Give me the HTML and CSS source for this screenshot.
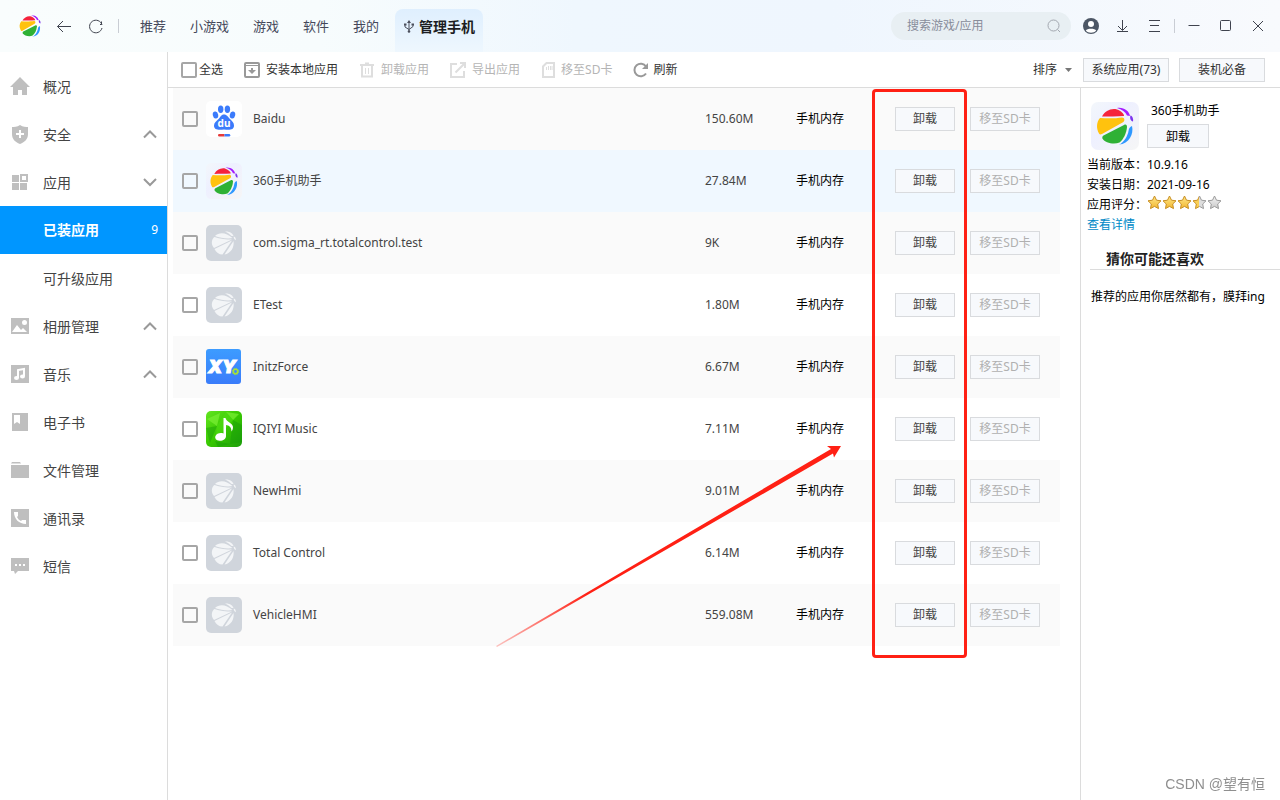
FILE: index.html
```html
<!DOCTYPE html>
<html lang="zh-CN">
<head>
<meta charset="utf-8">
<meta name="viewport" content="width=device-width, initial-scale=1">
<title>360手机助手</title>
<link rel="stylesheet" href="styles.css">
</head>
<body>
<svg class="defs" aria-hidden="true">
  <defs>
    <linearGradient id="tile" x1="0" y1="0" x2="1" y2="1"><stop offset="0" stop-color="#f3f7fb"/><stop offset=".4" stop-color="#eef0ff"/><stop offset="1" stop-color="#f6f6f6"/></linearGradient>
    <linearGradient id="xy" x1="0" y1="0" x2="0" y2="1"><stop offset="0" stop-color="#3d9cff"/><stop offset="1" stop-color="#3a7cfa"/></linearGradient>
    <linearGradient id="leaf" x1="0" y1="0" x2="1" y2="1"><stop offset="0" stop-color="#63e520"/><stop offset=".5" stop-color="#37c800"/><stop offset="1" stop-color="#1d9d0c"/></linearGradient>
    <linearGradient id="gold" x1="0" y1="0" x2="0" y2="1"><stop offset="0" stop-color="#ffe98a"/><stop offset="1" stop-color="#f2b630"/></linearGradient>
    <linearGradient id="silver" x1="0" y1="0" x2="0" y2="1"><stop offset="0" stop-color="#f4f4f4"/><stop offset="1" stop-color="#c9c9c9"/></linearGradient>
    <linearGradient id="half"><stop offset=".5" stop-color="#f9cf55"/><stop offset=".5" stop-color="#dedede"/></linearGradient>
    <linearGradient id="half-line"><stop offset=".5" stop-color="#c98f22"/><stop offset=".5" stop-color="#9b9b9b"/></linearGradient>
    <linearGradient id="fade" gradientUnits="userSpaceOnUse" x1="0" y1="202" x2="90" y2="148"><stop offset="0" stop-color="#ff2014" stop-opacity=".25"/><stop offset="1" stop-color="#ff2014"/></linearGradient>
  </defs>
  <symbol id="ball" viewBox="5 5 38 38">
    <path fill="#f5233c" d="M11 14.500C14 9 20 6 26 7.500 30 9 33 11.500 33 14 26 14.500 17 14.500 11 14.500Z"/>
    <path fill="#ffc20e" d="M9 16C16 16.500 25 16.500 31 15.500 34 15.500 34 19 32 20.300L11 32C9.500 32.800 8.500 32.500 8 31.500 5 26 5.500 20 9 16Z"/>
    <path fill="#2fb135" d="M12.500 33.500 33 23C35 22 36 23 36 25 35.500 31 32.500 37.500 28.500 40.500 23 43 14 41 11.500 36.500 11 35 11.500 34.200 12.500 33.500Z"/>
    <path fill="#2e98ff" d="M41 24C43 32 38 42 28 42.500 33 41 37 33 37.500 29 38 26 39 25 41 24Z"/>
    <path fill="#a41bff" d="M26 6C33 5 38 9 39 14L36 13.500C34.500 10 31 7.500 26 6Z"/>
    <path fill="#7c35ee" d="M39.500 13.500C41.500 14 42.500 17 42 19.500 39.500 19 38.500 16 39.500 13.500Z"/>
  </symbol>
  <symbol id="app-360" viewBox="0 0 48 48"><rect width="48" height="48" rx="7" fill="url(#tile)"/><use href="#ball" x="5" y="5" width="38" height="38"/></symbol>
  <symbol id="app-blank" viewBox="0 0 36 36">
    <rect width="36" height="36" rx="5" fill="#d0d5dc"/>
    <g fill="#f3f5f7"><path d="M9 11C13 7 20 7 26.500 13 22 14 14 13 9 11ZM6 16C6.500 14 7.500 12.500 8.500 12 14 14 20 14.500 26 14.500L8 23C6 21 5.500 18 6 16ZM8.500 24 26 15.500 16.500 29.500C13 29.500 10 27.500 8.500 24ZM18.500 29.500 27.500 16C28.500 22 25 28.500 18.500 29.500ZM19 6.500C23.500 6 27 8.500 27.500 11L25.500 11C23.500 9 22 8 19 6.500ZM27.700 11.500C29.500 12 30.200 14 29.700 15.200 28.500 14.500 27.500 13 27.700 11.500Z"/></g>
  </symbol>
  <symbol id="app-music" viewBox="0 0 36 36">
    <rect width="36" height="36" rx="5" fill="url(#leaf)"/>
    <path fill="#7bf034" opacity=".7" d="M1 8 14 2 11 15ZM20 1 33 3 27 9Z"/><path fill="#169b08" opacity=".45" d="M0 17 11 15 4 32ZM27 9 36 14V31L24 33ZM9 30 24 33 12 36Z"/><path fill="#4fdc12" opacity=".6" d="M11 15 20 1 27 9 9 30Z"/>
    <path fill="#fff" d="M17.500 7H19.500C20 11 27 12 27 16 27 18 26.500 19 25.500 20.500 25.500 16 23 14.500 20 14V25C20 28 17 30 13.500 29.800 10 29.500 8.500 27 9.500 25 10.500 22.500 14 21.500 17.500 22.500Z"/>
  </symbol>
  <symbol id="up" viewBox="0 0 16 16"><path d="M2 10.500 8 4.500 14 10.500" fill="none" stroke="#999" stroke-width="2"/></symbol>
  <symbol id="down" viewBox="0 0 16 16"><path d="M2 4 8 10 14 4" fill="none" stroke="#999" stroke-width="2"/></symbol>
  <symbol id="star" viewBox="0 0 15 15"><path d="M7.500 1 9.500 5.200 14 5.800 10.700 9 11.500 13.600 7.500 11.400 3.500 13.600 4.300 9 1 5.800 5.500 5.200Z" stroke-linejoin="round"/></symbol>
</svg>

<header class="titlebar">
  <svg class="brand" aria-label="360手机助手"><use href="#ball"/></svg>
  <button class="plain back" aria-label="后退"><svg width="16" height="16" viewBox="0 0 16 16"><path d="M15 8.500H1.500M7 3 1.500 8.500 7 14"/></svg></button>
  <button class="plain reload" aria-label="刷新页面"><svg width="16" height="16" viewBox="0 0 16 16"><path d="M14 7A6.300 6.300 0 1 0 14 10M13.500 3.500V6.500H12"/></svg></button>
  <span class="divider"></span>
  <nav class="tabs" aria-label="主导航">
    <a href="#">推荐</a><a href="#">小游戏</a><a href="#">游戏</a><a href="#">软件</a><a href="#">我的</a>
    <a class="current" href="#" aria-current="page"><svg width="12" height="13" viewBox="0 0 12 13"><path d="M6 1.500V12M2 5V7L6 9.500M10 4V6.500L6 9.500" fill="none" stroke="#4b4f5c"/><path d="M6 0 8 3H4ZM1 3.500H3.500V5.500H1ZM8.500 3.500H11V5.500H8.500Z" fill="#4b4f5c"/><circle cx="6" cy="11.500" r="1.300" fill="#4b4f5c"/></svg>管理手机</a>
  </nav>
  <form class="search" role="search">
    <input type="search" placeholder="搜索游戏/应用" aria-label="搜索游戏/应用">
    <button class="plain" type="button" aria-label="搜索"><svg width="16" height="16" viewBox="0 0 16 16"><circle cx="7.500" cy="7.500" r="5.500"/><path d="M11.500 11.500 14 14"/></svg></button>
  </form>
  <div class="tools">
    <button class="plain" aria-label="账户"><svg width="16" height="16" viewBox="0 0 16 16"><circle cx="8" cy="8" r="8" fill="#4c5665" stroke="none"/><circle cx="8" cy="6" r="3" fill="#fff" stroke="none"/><path d="M2.800 12.500C4 10 12 10 13.200 12.500 11 15.500 5 15.500 2.800 12.500Z" fill="#fff" stroke="none"/></svg></button>
    <button class="plain" aria-label="下载"><svg width="16" height="16" viewBox="0 0 16 16"><path d="M7.500 2V12M3 8 7.500 12.500 12 8M2 13.500H13"/></svg></button>
    <button class="plain" aria-label="菜单"><svg width="16" height="16" viewBox="0 0 16 16"><path d="M2 2.500H13M3 7.500H12M2 13.500H13"/></svg></button>
  </div>
  <span class="divider"></span>
  <div class="tools">
    <button class="plain" aria-label="最小化"><svg width="16" height="16" viewBox="0 0 16 16"><path d="M2.500 7.500H13.500"/></svg></button>
    <button class="plain" aria-label="最大化"><svg width="16" height="16" viewBox="0 0 16 16"><rect x="2.500" y="2.500" width="10" height="10" rx="1"/></svg></button>
    <button class="plain" aria-label="关闭"><svg width="16" height="16" viewBox="0 0 16 16"><path d="M3 3 13 13M13 3 3 13"/></svg></button>
  </div>
</header>

<div class="body">
  <nav class="sidebar" aria-label="手机管理">
    <a href="#"><svg viewBox="0 0 20 20"><path d="M10 0 20 10H17V18H12V13H8V18H3V10H0Z"/></svg>概况</a>
    <a href="#"><svg viewBox="0 0 20 20"><path d="M10 0C13 2 16 2 18 2V9C18 14 15 17 10 19 5 17 2 14 2 9V2C4 2 7 2 10 0Z"/><path d="M6 9H14M10 5V13" stroke="#fff" stroke-width="2"/></svg>安全<svg class="chevron"><use href="#up"/></svg></a>
    <a href="#"><svg viewBox="0 0 20 20"><path d="M2 2H9V9H2ZM2 10H9V17H2ZM10 10H17V17H10ZM10 1H18V9H10ZM12 3V7H16V3Z" fill-rule="evenodd"/></svg>应用<svg class="chevron"><use href="#down"/></svg></a>
    <a class="sub active" href="#" aria-current="page">已装应用<span class="count">9</span></a>
    <a class="sub" href="#">可升级应用</a>
    <a href="#"><svg viewBox="0 0 20 20"><path d="M1 1H19V17H1Z"/><path d="M2 15 7 8 11 13 13 11 17 15Z" fill="#fff"/><circle cx="14.500" cy="5.500" r="2.500" fill="#fff"/></svg>相册管理<svg class="chevron"><use href="#up"/></svg></a>
    <a href="#"><svg viewBox="0 0 20 20"><path d="M1 0H19V18H1Z"/><path d="M8 13V5L14 4V11" fill="none" stroke="#fff" stroke-width="2"/><ellipse cx="6.500" cy="13" rx="2.500" ry="2" fill="#fff"/><ellipse cx="12.500" cy="11.500" rx="2.500" ry="2" fill="#fff"/></svg>音乐<svg class="chevron"><use href="#up"/></svg></a>
    <a href="#"><svg viewBox="0 0 20 20"><path d="M2 0H18V18H2Z"/><path d="M4 2H10V11L7 9 4 11Z" fill="#fff"/></svg>电子书</a>
    <a href="#"><svg viewBox="0 0 20 20"><path d="M2 1H10L11 2.500H1ZM1 4H19V17H1Z"/></svg>文件管理</a>
    <a href="#"><svg viewBox="0 0 20 20"><path d="M1 0H19V18H1Z"/><path d="M4 3H8V7L7 8C8 10 9 11 11 12L12 11H16V15C9 15 4 10 4 3Z" fill="#fff"/></svg>通讯录</a>
    <a href="#"><svg viewBox="0 0 20 20"><path d="M1 1H19V14H8L5 17 4 14H1Z"/><path d="M5 7H7V9H5ZM9 7H11V9H9ZM13 7H15V9H13Z" fill="#fff"/></svg>短信</a>
  </nav>

  <div class="workspace">
    <div class="toolbar">
      <label class="select-all"><input type="checkbox">全选</label>
      <button class="plain action"><svg width="16" height="16" viewBox="0 0 16 16"><rect x="1" y="1" width="14" height="14" rx="1" stroke-width="2"/><path d="M2 3.500H14" stroke-width="1"/><path d="M7 6H9V8H12L8 12 4 8H7Z" fill="#999" stroke="none"/></svg>安装本地应用</button>
      <button class="plain action" disabled><svg width="16" height="16" viewBox="0 0 16 16"><path d="M1 3H15M6 1.500H10M3 4V14.500H13V4" stroke-width="2"/><path d="M6.500 6V12M9.500 6V12" stroke-width="1"/></svg>卸载应用</button>
      <button class="plain action" disabled><svg width="16" height="16" viewBox="0 0 16 16"><path d="M7 2H1V15H14V9M5.500 10.500 14.500 1.500M10 1H15V6" stroke-width="2"/></svg>导出应用</button>
      <button class="plain action" disabled><svg width="14" height="16" viewBox="0 0 14 16"><path d="M5.500 1H13V15H2V4.500Z" stroke-width="2"/><path d="M5.500 5V8M7.500 4V8M9.500 4V8M11 4V8" stroke-width="1"/></svg>移至SD卡</button>
      <button class="plain action refresh"><svg width="16" height="16" viewBox="0 0 16 16"><path d="M13 11.500A6.300 6.300 0 1 1 13 4.500" stroke-width="2"/><path d="M15 1V7H9Z" fill="#999" stroke="none"/></svg>刷新</button>
      <div class="toolbar-end">
        <button class="plain sort">排序<svg width="7" height="4" viewBox="0 0 7 4"><path d="M0 0H7L3.500 4Z" fill="#777"/></svg></button>
        <button class="btn wide">系统应用(73)</button>
        <button class="btn wide">装机必备</button>
      </div>
    </div>

    <div class="content">
      <main class="list">
        <table>
          <colgroup><col class="c-check"><col><col class="c-size"><col class="c-store"><col class="c-act"></colgroup>
          <tbody>
            <tr><td><input type="checkbox" aria-label="Baidu"></td><td><div class="app"><svg viewBox="0 0 36 36" aria-hidden="true">
              <rect width="36" height="36" rx="5" fill="#fff"/>
              <g fill="#3b7bfb"><ellipse cx="9.500" cy="14" rx="2.700" ry="3.500" transform="rotate(-12 9.500 14)"/><ellipse cx="14.700" cy="8.200" rx="2.700" ry="3.700"/><ellipse cx="21.400" cy="8.200" rx="2.700" ry="3.700"/><ellipse cx="26.500" cy="14" rx="2.700" ry="3.500" transform="rotate(12 26.500 14)"/><path d="M18 13.500C21 13.500 22 16 24 18 26 20 28 21.500 28 24.500 28 29 24 29 18 28.500 12 29 8 29 8 24.500 8 21.500 10.500 20 12.500 18 14.500 16 15 13.500 18 13.500Z"/></g>
              <text class="mark-du" x="18" y="26" text-anchor="middle">du</text>
              <path fill="#e63a3a" d="M13 33h5.500v2.500h-5a1.200 1.200 0 0 1-.5-2.500Z"/><path fill="#3b7bfb" d="M18.500 33H23a1.200 1.200 0 0 1 0 2.500h-4.500Z"/>
            </svg>Baidu</div></td><td>150.60M</td><td class="store">手机内存</td><td><div class="acts"><button class="btn">卸载</button><button class="btn" disabled>移至SD卡</button></div></td></tr>
            <tr class="hover"><td><input type="checkbox" aria-label="360手机助手"></td><td><div class="app"><svg><use href="#app-360"/></svg>360手机助手</div></td><td>27.84M</td><td class="store">手机内存</td><td><div class="acts"><button class="btn">卸载</button><button class="btn" disabled>移至SD卡</button></div></td></tr>
            <tr><td><input type="checkbox" aria-label="com.sigma_rt.totalcontrol.test"></td><td><div class="app"><svg><use href="#app-blank"/></svg>com.sigma_rt.totalcontrol.test</div></td><td>9K</td><td class="store">手机内存</td><td><div class="acts"><button class="btn">卸载</button><button class="btn" disabled>移至SD卡</button></div></td></tr>
            <tr><td><input type="checkbox" aria-label="ETest"></td><td><div class="app"><svg><use href="#app-blank"/></svg>ETest</div></td><td>1.80M</td><td class="store">手机内存</td><td><div class="acts"><button class="btn">卸载</button><button class="btn" disabled>移至SD卡</button></div></td></tr>
            <tr><td><input type="checkbox" aria-label="InitzForce"></td><td><div class="app"><svg viewBox="0 0 36 36" aria-hidden="true">
              <rect width="35" height="35" rx="3" fill="url(#xy)"/>
              <text class="mark-xy" x="16" y="24" text-anchor="middle">XY</text>
              <circle cx="29.500" cy="22.500" r="2.200" fill="none" stroke="#a8e234" stroke-width="1.600"/><circle cx="29.500" cy="22.500" r="3.200" fill="none" stroke="#a8e234" stroke-dasharray="1.200 1.300"/>
            </svg>InitzForce</div></td><td>6.67M</td><td class="store">手机内存</td><td><div class="acts"><button class="btn">卸载</button><button class="btn" disabled>移至SD卡</button></div></td></tr>
            <tr><td><input type="checkbox" aria-label="IQIYI Music"></td><td><div class="app"><svg><use href="#app-music"/></svg>IQIYI Music</div></td><td>7.11M</td><td class="store">手机内存</td><td><div class="acts"><button class="btn">卸载</button><button class="btn" disabled>移至SD卡</button></div></td></tr>
            <tr><td><input type="checkbox" aria-label="NewHmi"></td><td><div class="app"><svg><use href="#app-blank"/></svg>NewHmi</div></td><td>9.01M</td><td class="store">手机内存</td><td><div class="acts"><button class="btn">卸载</button><button class="btn" disabled>移至SD卡</button></div></td></tr>
            <tr><td><input type="checkbox" aria-label="Total Control"></td><td><div class="app"><svg><use href="#app-blank"/></svg>Total Control</div></td><td>6.14M</td><td class="store">手机内存</td><td><div class="acts"><button class="btn">卸载</button><button class="btn" disabled>移至SD卡</button></div></td></tr>
            <tr><td><input type="checkbox" aria-label="VehicleHMI"></td><td><div class="app"><svg><use href="#app-blank"/></svg>VehicleHMI</div></td><td>559.08M</td><td class="store">手机内存</td><td><div class="acts"><button class="btn">卸载</button><button class="btn" disabled>移至SD卡</button></div></td></tr>
          </tbody>
        </table>
        <div class="callout"></div>
        <svg class="arrow" width="346" height="202" viewBox="0 0 346 202" aria-hidden="true"><path fill="url(#fade)" d="M0 201 335 4 331 1H345L338 12.500 337 8.500 1 202Z"/></svg>
      </main>

      <aside class="detail">
        <div class="summary">
          <svg class="detail-icon"><use href="#app-360"/></svg>
          <div class="summary-text"><h2>360手机助手</h2><button class="btn">卸载</button></div>
        </div>
        <dl>
          <dt>当前版本：</dt><dd>10.9.16</dd>
          <dt>安装日期：</dt><dd>2021-09-16</dd>
          <dt>应用评分：</dt><dd class="stars" role="img" aria-label="3.5"><svg class="gold"><use href="#star"/></svg><svg class="gold"><use href="#star"/></svg><svg class="gold"><use href="#star"/></svg><svg class="half"><use href="#star"/></svg><svg class="silver"><use href="#star"/></svg></dd>
        </dl>
        <a class="more" href="#">查看详情</a>
        <h3>猜你可能还喜欢</h3>
        <p>推荐的应用你居然都有，膜拜ing</p>
      </aside>
    </div>
  </div>
</div>
<div class="watermark">CSDN @望有恒</div>
</body>
</html>
```

FILE: styles.css
```css
* { box-sizing: border-box; }
body {
  margin: 0;
  min-height: 100vh;
  display: flex;
  flex-direction: column;
  background: #fff;
  color: #333;
  font: 12px/20px "Noto Sans", "Noto Sans CJK SC", sans-serif;
}
a { color: inherit; text-decoration: none; }
button, input { font: inherit; color: inherit; }
h2, h3, p, dl, dd { margin: 0; }
svg { flex: none; }
.defs { position: absolute; width: 0; height: 0; }
.mark-du { font: 700 10px "Noto Sans", sans-serif; fill: #fff; }
.mark-xy { font: italic 900 18px Inter, sans-serif; fill: #fff; stroke: #fff; }

.plain {
  display: flex;
  align-items: center;
  padding: 0;
  border: 0;
  background: none;
}
.btn {
  height: 24px;
  width: 60px;
  padding: 0;
  line-height: 20px;
  border: 1px solid #d9dbde;
  background: #f7f9fc;
  white-space: nowrap;
}
.btn:disabled { width: 70px; color: #b0b0b0; }
.btn.wide { width: 86px; }
input[type="checkbox"] {
  appearance: none;
  display: block;
  flex: none;
  width: 16px;
  height: 16px;
  margin: 0;
  border: 2px solid #a6a6a6;
  border-radius: 2px;
}

/* title bar */
.titlebar {
  display: flex;
  align-items: center;
  height: 52px;
  padding: 0 14px 0 19px;
  background: linear-gradient(90deg, #f9fdfd 0%, #f7fcfd 25%, #eff7fe 45%, #eff6fe 65%, #f8fafd 100%);
}
.titlebar .plain svg { fill: none; stroke: #3f434e; }
.brand { width: 22px; height: 22px; }
.back { margin-left: 15px; }
.reload { margin-left: 16px; }
.divider { width: 1px; height: 14px; background: #c9cdd4; }
.reload + .divider { margin-left: 14px; }
.tabs {
  display: flex;
  align-self: flex-end;
  align-items: center;
  gap: 24px;
  margin-left: 21px;
  font-size: 13px;
  color: #44485a;
}
.tabs .current {
  display: flex;
  align-items: center;
  justify-content: center;
  gap: 4px;
  height: 43px;
  margin-left: -8px;
  padding: 0 8px 8px;
  border-radius: 8px 8px 0 0;
  background: linear-gradient(#dfeffe, #eef7fe);
  font-size: 14px;
  font-weight: 700;
  color: #1c1d22;
}
.tabs a:not(.current) { padding-bottom: 8px; line-height: 35px; }
.search {
  display: flex;
  align-items: center;
  width: 180px;
  height: 28px;
  margin-left: auto;
  padding: 0 9px 0 16px;
  border-radius: 14px;
  background: #e8eff3;
}
.search input {
  flex: 1;
  min-width: 0;
  padding: 0;
  border: 0;
  outline: 0;
  background: none;
  font-size: 12px;
}
.search input::placeholder { color: #888d9b; }
.titlebar .search svg { stroke: #a3a8b0; }
.tools { display: flex; gap: 16px; margin-left: 12px; }
.tools + .divider { margin-left: 11px; }
.divider + .tools { margin-left: 11px; }

/* sidebar */
.body { display: flex; flex: 1; }
.sidebar { width: 168px; flex: none; padding-top: 10px; border-right: 1px solid #dcdcdc; }
.sidebar a {
  display: flex;
  align-items: center;
  gap: 13px;
  height: 48px;
  padding: 2px 9px 0 10px;
  font-size: 14px;
  color: #444;
}
.sidebar svg { width: 20px; height: 20px; fill: #bfbfbf; }
.sidebar svg.chevron { width: 16px; height: 16px; margin-left: auto; }
.sidebar a.sub { padding-left: 43px; }
.sidebar a.active { padding-top: 0; background: #0096ff; color: #fff; font-weight: 700; }
.count { margin-left: auto; font-size: 12px; font-weight: 400; }

/* toolbar */
.workspace { flex: 1; min-width: 0; display: flex; flex-direction: column; }
.toolbar {
  display: flex;
  align-items: center;
  gap: 21px;
  height: 36px;
  padding: 0 15px 0 13px;
  border-bottom: 1px solid #dcdcdc;
  white-space: nowrap;
}
.select-all { display: flex; align-items: center; gap: 2px; }
.action { gap: 6px; }
.action.refresh { gap: 4px; }
.action svg { fill: none; stroke: #999; }
.action:disabled { color: #b5b5b5; }
.action:disabled svg { stroke: #dedede; }
.toolbar-end { display: flex; gap: 10px; margin-left: auto; }
.sort { gap: 8px; margin-right: 1px; }

/* application list */
.content { display: flex; flex: 1; }
.list { position: relative; flex: 1; min-width: 0; margin: 0 20px 0 5px; align-self: flex-start; }
table { width: 100%; table-layout: fixed; border-collapse: collapse; }
.c-check { width: 33px; }
.c-size { width: 91px; }
.c-store { width: 99px; }
.c-act { width: 165px; }
tr { height: 62px; }
tr:nth-child(odd) { background: #fafafa; }
tr.hover { background: #f0f8ff; }
td { padding: 0; color: #444; }
td:first-child { padding-left: 9px; }
td.store { color: #000; }
.app { display: flex; align-items: center; gap: 11px; }
.app svg { width: 36px; height: 36px; }
.acts { display: flex; gap: 15px; }
.callout {
  position: absolute;
  top: 1px;
  right: 93px;
  width: 95px;
  height: 569px;
  border: 3px solid #ff2014;
  border-radius: 4px;
}
.arrow { position: absolute; top: 357px; right: 218px; }

/* detail pane */
.detail { width: 200px; flex: none; padding: 14px 0 0 6px; border-left: 1px solid #dcdcdc; color: #000; }
.summary { display: flex; gap: 8px; padding-left: 4px; }
.detail-icon { width: 48px; height: 48px; }
.summary h2 { padding-left: 4px; margin-bottom: 4px; font-size: 12px; font-weight: 400; line-height: 18px; }
.summary .btn { width: 62px; padding-top: 2px; }
dl { display: grid; grid-template-columns: 60px 1fr; margin-top: 5px; }
dt { white-space: nowrap; }
.stars { display: flex; align-items: flex-start; }
.stars svg { width: 15px; height: 15px; }
.gold { fill: url(#gold); stroke: #c98f22; }
.silver { fill: url(#silver); stroke: #9b9b9b; }
.half { fill: url(#half); stroke: url(#half-line); }
.more { color: #0089c7; }
.detail h3 { margin: 14px 0 0 3px; padding-left: 16px; border-bottom: 1px solid #dcdcdc; font-size: 14px; line-height: 20px; color: #222; }
.detail p { margin: 17px 0 0 4px; white-space: nowrap; }

.watermark { position: fixed; right: 15px; bottom: 6px; font-family: "Liberation Sans", "Noto Sans CJK SC", sans-serif; font-size: 14px; color: #8f8f8f; }
```
